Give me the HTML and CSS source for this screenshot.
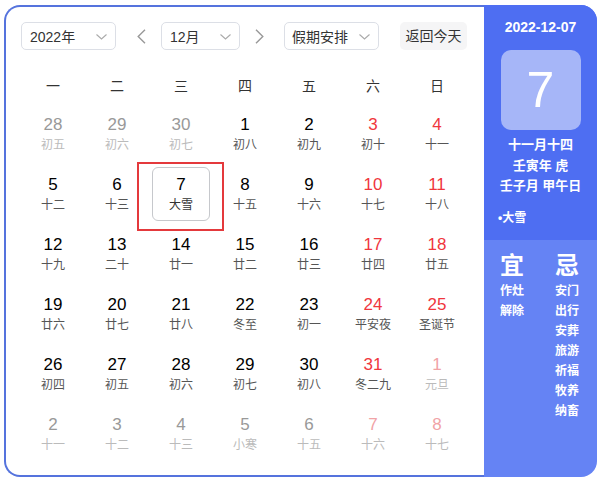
FILE: index.html
```html
<!DOCTYPE html>
<html lang="zh-CN">
<head>
<meta charset="utf-8">
<title>万年历</title>
<link rel="stylesheet" href="styles.css">
</head>
<body>
<div class="cal">
  <div class="main">
    <div class="toolbar">
      <div class="select sel-year"><span>2022年</span>
        <svg class="caret" width="11" height="6" viewBox="0 0 11 6"><path d="M0.5 0.5 L5.5 5 L10.5 0.5" fill="none" stroke="#aaa" stroke-width="1.1"/></svg>
      </div>
      <span class="arrow arrow-prev"><svg width="9" height="15" viewBox="0 0 9 15"><path d="M8 0.7 L1.2 7.5 L8 14.3" fill="none" stroke="#999" stroke-width="1.4"/></svg></span>
      <div class="select sel-month"><span>12月</span>
        <svg class="caret" width="11" height="6" viewBox="0 0 11 6"><path d="M0.5 0.5 L5.5 5 L10.5 0.5" fill="none" stroke="#aaa" stroke-width="1.1"/></svg>
      </div>
      <span class="arrow arrow-next"><svg width="9" height="15" viewBox="0 0 9 15"><path d="M1 0.7 L7.8 7.5 L1 14.3" fill="none" stroke="#999" stroke-width="1.4"/></svg></span>
      <div class="select sel-holiday"><span>假期安排</span>
        <svg class="caret" width="11" height="6" viewBox="0 0 11 6"><path d="M0.5 0.5 L5.5 5 L10.5 0.5" fill="none" stroke="#aaa" stroke-width="1.1"/></svg>
      </div>
      <div class="today-btn">返回今天</div>
    </div>
    <div class="weekdays">
      <span>一</span><span>二</span><span>三</span><span>四</span><span>五</span><span>六</span><span>日</span>
    </div>
    <div class="grid">
      <div class="cell other"><div class="day"><b>28</b><i>初五</i></div></div>
      <div class="cell other"><div class="day"><b>29</b><i>初六</i></div></div>
      <div class="cell other"><div class="day"><b>30</b><i>初七</i></div></div>
      <div class="cell"><div class="day"><b>1</b><i>初八</i></div></div>
      <div class="cell"><div class="day"><b>2</b><i>初九</i></div></div>
      <div class="cell red"><div class="day"><b>3</b><i>初十</i></div></div>
      <div class="cell red"><div class="day"><b>4</b><i>十一</i></div></div>

      <div class="cell"><div class="day"><b>5</b><i>十二</i></div></div>
      <div class="cell"><div class="day"><b>6</b><i>十三</i></div></div>
      <div class="cell current"><div class="day selected"><b>7</b><i>大雪</i></div><span class="mark"></span></div>
      <div class="cell"><div class="day"><b>8</b><i>十五</i></div></div>
      <div class="cell"><div class="day"><b>9</b><i>十六</i></div></div>
      <div class="cell red"><div class="day"><b>10</b><i>十七</i></div></div>
      <div class="cell red"><div class="day"><b>11</b><i>十八</i></div></div>

      <div class="cell"><div class="day"><b>12</b><i>十九</i></div></div>
      <div class="cell"><div class="day"><b>13</b><i>二十</i></div></div>
      <div class="cell"><div class="day"><b>14</b><i>廿一</i></div></div>
      <div class="cell"><div class="day"><b>15</b><i>廿二</i></div></div>
      <div class="cell"><div class="day"><b>16</b><i>廿三</i></div></div>
      <div class="cell red"><div class="day"><b>17</b><i>廿四</i></div></div>
      <div class="cell red"><div class="day"><b>18</b><i>廿五</i></div></div>

      <div class="cell"><div class="day"><b>19</b><i>廿六</i></div></div>
      <div class="cell"><div class="day"><b>20</b><i>廿七</i></div></div>
      <div class="cell"><div class="day"><b>21</b><i>廿八</i></div></div>
      <div class="cell"><div class="day"><b>22</b><i>冬至</i></div></div>
      <div class="cell"><div class="day"><b>23</b><i>初一</i></div></div>
      <div class="cell red"><div class="day"><b>24</b><i>平安夜</i></div></div>
      <div class="cell red"><div class="day"><b>25</b><i>圣诞节</i></div></div>

      <div class="cell"><div class="day"><b>26</b><i>初四</i></div></div>
      <div class="cell"><div class="day"><b>27</b><i>初五</i></div></div>
      <div class="cell"><div class="day"><b>28</b><i>初六</i></div></div>
      <div class="cell"><div class="day"><b>29</b><i>初七</i></div></div>
      <div class="cell"><div class="day"><b>30</b><i>初八</i></div></div>
      <div class="cell red"><div class="day"><b>31</b><i>冬二九</i></div></div>
      <div class="cell other red"><div class="day"><b>1</b><i>元旦</i></div></div>

      <div class="cell other"><div class="day"><b>2</b><i>十一</i></div></div>
      <div class="cell other"><div class="day"><b>3</b><i>十二</i></div></div>
      <div class="cell other"><div class="day"><b>4</b><i>十三</i></div></div>
      <div class="cell other"><div class="day"><b>5</b><i>小寒</i></div></div>
      <div class="cell other"><div class="day"><b>6</b><i>十五</i></div></div>
      <div class="cell other red"><div class="day"><b>7</b><i>十六</i></div></div>
      <div class="cell other red"><div class="day"><b>8</b><i>十七</i></div></div>
    </div>
  </div>
  <div class="side">
    <div class="side-top">
      <div class="date">2022-12-07</div>
      <div class="big-day">7</div>
      <div class="lunar">
        <div>十一月十四</div>
        <div>壬寅年 虎</div>
        <div>壬子月 甲午日</div>
      </div>
      <div class="term">•大雪</div>
    </div>
    <div class="side-bottom">
      <div class="col col-yi">
        <div class="col-title">宜</div>
        <div>作灶</div>
        <div>解除</div>
      </div>
      <div class="col col-ji">
        <div class="col-title">忌</div>
        <div>安门</div>
        <div>出行</div>
        <div>安葬</div>
        <div>旅游</div>
        <div>祈福</div>
        <div>牧养</div>
        <div>纳畜</div>
      </div>
    </div>
  </div>
</div>
</body>
</html>
```

FILE: styles.css
```css
* { box-sizing: border-box; }
html, body { margin: 0; padding: 0; background: #fff; }
body {
  font-family: "Liberation Sans", "Noto Sans CJK SC", sans-serif;
  color: #333;
}
.cal {
  display: flex;
  margin: 5px 0 0 4px;
  width: 593px;
  height: 472px;
}
.main {
  position: relative;
  width: 480px;
  height: 472px;
  border: 2px solid #5573dd;
  border-right: none;
  border-radius: 16px 0 0 16px;
  padding: 15px 0 0 15px;
}
.toolbar {
  display: flex;
  align-items: center;
  height: 28px;
}
.select {
  display: flex;
  align-items: center;
  justify-content: space-between;
  height: 28px;
  border: 1px solid #dcdfe6;
  border-radius: 5px;
  padding: 0 8px 0 8px;
  font-size: 14px;
  color: #333;
}
.sel-year { width: 95px; }
.sel-month { width: 79px; }
.sel-holiday { width: 95px; padding-left: 7px; }
.caret { margin-top: 1px; }
.arrow { display: flex; align-items: center; height: 28px; }
.arrow-prev { margin: 0 15px 0 21px; }
.arrow-next { margin: 0 20px 0 15px; }
.today-btn {
  margin-left: 21px;
  width: 67px;
  height: 28px;
  line-height: 28px;
  text-align: center;
  background: #f5f5f6;
  border-radius: 5px;
  font-size: 14px;
  color: #333;
}
.weekdays {
  display: grid;
  grid-template-columns: repeat(7, 64px);
  margin-top: 16px;
  height: 38px;
  align-items: center;
  font-size: 14px;
  color: #333;
  text-align: center;
}
.grid {
  display: grid;
  grid-template-columns: repeat(7, 64px);
  grid-auto-rows: 60px;
}
.cell {
  position: relative;
  padding: 3px;
}
.day {
  height: 54px;
  display: flex;
  flex-direction: column;
  align-items: center;
  justify-content: center;
  border: 1px solid transparent;
  border-radius: 6px;
}
.day b {
  font-weight: normal;
  font-size: 17px;
  line-height: 20px;
  color: #000;
}
.day i {
  font-style: normal;
  font-size: 12px;
  line-height: 16px;
  margin-top: 2px;
  color: #555;
}
.red .day b { color: #f0363d; }
.other .day b { color: #999; }
.other .day i { color: #bbb; }
.other.red .day b { color: #f1a3a6; }
.day.selected { border-color: #c6c8cc; }
.day.selected i { color: #333; }
.mark {
  position: absolute;
  left: -12px;
  top: -2px;
  width: 87px;
  height: 69px;
  border: 2px solid #e4393c;
}
.side {
  width: 113px;
  height: 472px;
  border-radius: 0 16px 16px 0;
  overflow: hidden;
  background: #6583f4;
  color: #fff;
  display: flex;
  flex-direction: column;
}
.side-top {
  background: #4e6ef2;
  height: 235px;
  display: flex;
  flex-direction: column;
  align-items: center;
  padding-top: 13px;
}
.date {
  font-size: 14px;
  line-height: 18px;
  font-weight: bold;
}
.big-day {
  margin-top: 14px;
  width: 80px;
  height: 80px;
  border-radius: 10px;
  background: #a6b6f8;
  font-size: 50px;
  line-height: 80px;
  text-align: center;
}
.lunar {
  margin-top: 5px;
  font-size: 13px;
  line-height: 20.5px;
  text-align: center;
  font-weight: bold;
}
.term {
  align-self: flex-start;
  margin: 12px 0 0 14px;
  font-size: 12px;
  line-height: 18px;
  font-weight: bold;
}
.side-bottom {
  display: flex;
  padding: 12px 0 0 16px;
  font-size: 12px;
  line-height: 20px;
  font-weight: bold;
}
.col-yi { width: 55px; }
.col-title {
  font-size: 24px;
  line-height: 28px;
  margin-bottom: 1px;
}
```
